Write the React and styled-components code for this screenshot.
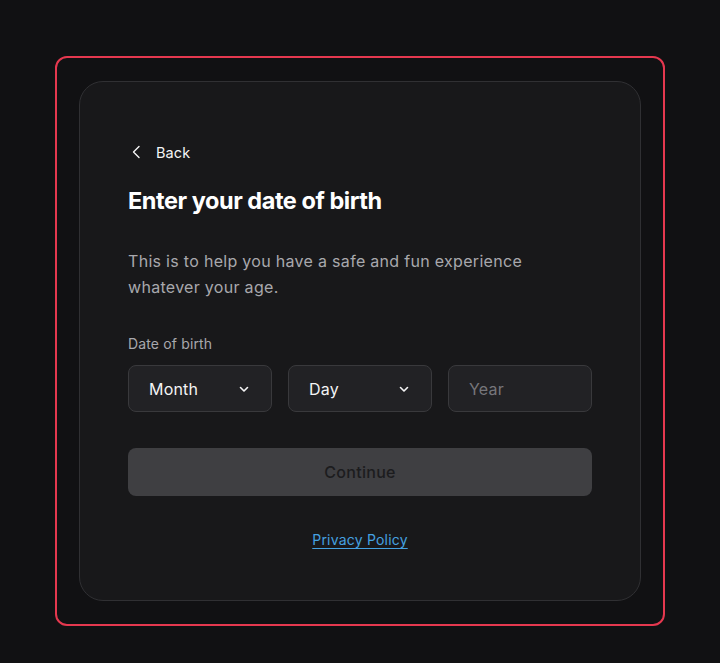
import styled, { createGlobalStyle } from "styled-components";

const GlobalStyle = createGlobalStyle`
  html, body {
    margin: 0;
    padding: 0;
    background: #111113;
  }
  body {
    font-family: Inter, "Noto Sans", sans-serif;
    -webkit-font-smoothing: antialiased;
  }
`;

const Page = styled.div`
  min-height: 663px;
  display: flex;
  justify-content: center;
  padding-top: 56px;
  box-sizing: border-box;
`;

const Frame = styled.div`
  width: 610px;
  height: 570px;
  box-sizing: border-box;
  border: 2px solid #e5384f;
  border-radius: 12px;
  padding: 23px 22px;
`;

const Card = styled.div`
  width: 562px;
  height: 520px;
  box-sizing: border-box;
  background: #18181a;
  border: 1px solid #303033;
  border-radius: 24px;
  padding: 60px 48px 0;
  display: flex;
  flex-direction: column;
`;

const BackLink = styled.button`
  display: flex;
  align-items: center;
  gap: 12px;
  background: none;
  border: 0;
  padding: 0;
  color: #f4f4f5;
  font-family: inherit;
  font-size: 14.5px;
  letter-spacing: 0.1px;
  cursor: pointer;
  height: 20px;
  align-self: flex-start;
`;

const Title = styled.h1`
  margin: 25px 0 0;
  color: #fff;
  font-size: 23.5px;
  font-weight: 700;
  letter-spacing: -0.45px;
  line-height: 28px;
`;

const Text = styled.p`
  margin: 33px 0 0;
  color: #a8a8ad;
  font-size: 16px;
  line-height: 26px;
  letter-spacing: 0.3px;
`;

const Label = styled.div`
  margin-top: 35px;
  color: #a8a8ad;
  font-size: 14px;
  line-height: 18px;
  letter-spacing: 0.15px;
`;

const Row = styled.div`
  margin-top: 12px;
  display: grid;
  grid-template-columns: repeat(3, 1fr);
  gap: 16px;
`;

const Field = styled.div`
  height: 47px;
  box-sizing: border-box;
  background: #222225;
  border: 1px solid #39393c;
  border-radius: 8px;
  padding: 0 19px 0 20px;
  display: flex;
  align-items: center;
  justify-content: space-between;
  font-size: 16px;
  letter-spacing: 0.2px;
  color: ${(p) => (p.$placeholder ? "#76767b" : "#f4f4f5")};
`;

const Button = styled.button`
  margin-top: 36px;
  height: 48px;
  border: 0;
  border-radius: 8px;
  background: #3f3f42;
  color: #1c1c1e;
  font-family: inherit;
  font-size: 16px;
  font-weight: 500;
  letter-spacing: 0.3px;
`;

const Footer = styled.div`
  margin-top: 33px;
  text-align: center;
`;

const Link = styled.a`
  color: #45a1e0;
  font-size: 14px;
  letter-spacing: 0.2px;
  text-decoration: underline;
  text-underline-offset: 3px;
`;

const Chevron = ({ dir }) => (
  <svg width="16" height="16" viewBox="0 0 16 16" fill="none">
    <path
      d={dir === "left" ? "M11 2.5 L5.5 8 L11 13.5" : "M4.5 6.5 L8 10 L11.5 6.5"}
      stroke="currentColor"
      strokeWidth={dir === "left" ? 1.4 : 1.6}
      strokeLinecap="round"
      strokeLinejoin="round"
    />
  </svg>
);

export default function App() {
  return (
    <>
      <GlobalStyle />
      <Page>
        <Frame>
          <Card>
            <BackLink>
              <Chevron dir="left" />
              Back
            </BackLink>
            <Title>Enter your date of birth</Title>
            <Text>
              This is to help you have a safe and fun experience
              <br />
              whatever your age.
            </Text>
            <Label>Date of birth</Label>
            <Row>
              <Field>
                Month
                <Chevron />
              </Field>
              <Field>
                Day
                <Chevron />
              </Field>
              <Field $placeholder>Year</Field>
            </Row>
            <Button>Continue</Button>
            <Footer>
              <Link href="#">Privacy Policy</Link>
            </Footer>
          </Card>
        </Frame>
      </Page>
    </>
  );
}
